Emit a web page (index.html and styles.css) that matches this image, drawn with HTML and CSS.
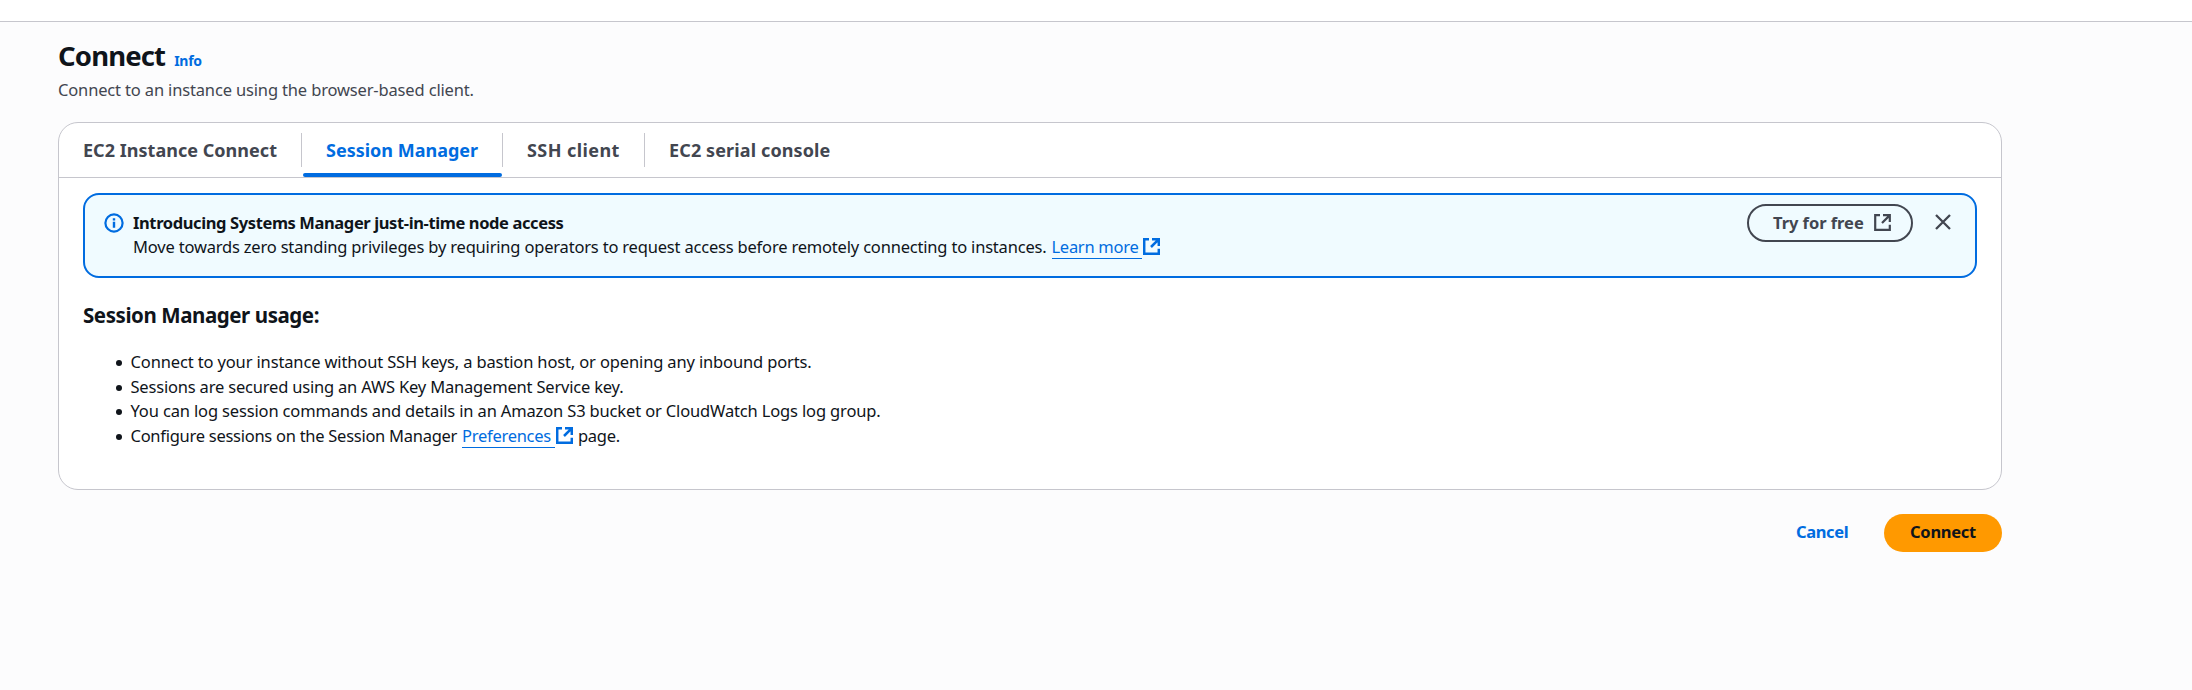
FILE: index.html
```html
<!DOCTYPE html>
<html lang="en">
<head>
<meta charset="utf-8">
<title>Connect to instance</title>
<link rel="stylesheet" href="styles.css">
</head>
<body>
<svg class="sprite" aria-hidden="true">
  <symbol id="external" viewBox="0 0 17 17">
    <path d="M6 1.2H1.2v14.6h14.6v-5M9 1.2h6.8V8M15.4 1.6L8 9" fill="none" stroke="currentColor"/>
  </symbol>
</svg>
<div class="topbar"></div>
<main class="page">
  <header class="heading">
    <div class="heading-row"><h1 class="title">Connect</h1><a class="info">Info</a></div>
    <p class="description">Connect to an instance using the browser-based client.</p>
  </header>
  <section class="panel">
    <nav class="tabs">
      <a class="tab"><span class="tab-label t1">EC2 Instance Connect</span></a>
      <a class="tab active"><span class="tab-label t2">Session Manager</span></a>
      <a class="tab"><span class="tab-label t3">SSH client</span></a>
      <a class="tab"><span class="tab-label t4">EC2 serial console</span></a>
    </nav>
    <div class="content">
      <div class="alert">
        <svg class="alert-icon" viewBox="0 0 20 20"><circle cx="10" cy="10" r="8.6" fill="none" stroke="currentColor" stroke-width="2.2"/><path d="M10 8.7v6M10 5.2v2.2" stroke="currentColor" stroke-width="2.4"/></svg>
        <div class="alert-body">
          <div class="alert-title">Introducing Systems Manager just-in-time node access</div>
          <div class="alert-text"><span class="alert-copy">Move towards zero standing privileges by requiring operators to request access before remotely connecting to instances.</span><a class="link learn">Learn more</a><svg class="ext"><use href="#external"/></svg></div>
        </div>
        <button class="try"><span>Try for free</span><svg class="ext"><use href="#external"/></svg></button>
        <button class="close" aria-label="Close"><svg viewBox="0 0 16 16"><path d="M1 1l14 14M15 1L1 15" stroke="currentColor" stroke-width="2.3" fill="none"/></svg></button>
      </div>
      <h2 class="usage">Session Manager usage:</h2>
      <ul class="list">
        <li><span class="l1">Connect to your instance without SSH keys, a bastion host, or opening any inbound ports.</span></li>
        <li><span class="l2">Sessions are secured using an AWS Key Management Service key.</span></li>
        <li><span class="l3">You can log session commands and details in an Amazon S3 bucket or CloudWatch Logs log group.</span></li>
        <li><span class="l4">Configure sessions on the Session Manager</span><a class="link prefs">Preferences</a><svg class="ext"><use href="#external"/></svg><span class="l5">page.</span></li>
      </ul>
    </div>
  </section>
  <footer class="actions"><a class="cancel">Cancel</a><button class="connect">Connect</button></footer>
</main>
</body>
</html>
```
FILE: styles.css
```css
* { box-sizing: border-box; }
body { margin: 0; min-height: 690px; background: #fcfcfd; color: #0f141a; font: 16.5px/24.6px "Noto Sans", "Open Sans", sans-serif; white-space: nowrap; }
h1, h2, p, ul { margin: 0; padding: 0; }
button { font: inherit; background: none; border: 0; padding: 0; margin: 0; color: inherit; }
.sprite { display: none; }
.topbar { height: 22px; background: #fff; border-bottom: 1px solid #c6c6cd; }
.page { width: 1944px; margin-left: 58px; }
.heading { height: 100px; padding-top: 15px; }
.heading-row { display: flex; align-items: baseline; gap: 9px; height: 41px; line-height: 37px; }
.title { font-size: 27.5px; font-weight: 700; line-height: 37px; letter-spacing: -0.85px; }
.info { font-size: 14px; font-weight: 700; color: #006ce0; letter-spacing: -0.3px; }
.description { color: #424650; letter-spacing: -0.155px; }
.panel { height: 368px; background: #fff; border: 1px solid #c6c6cd; border-radius: 20px; }
.tabs { display: flex; height: 55px; border-bottom: 1px solid #c6c6cd; padding-left: 1px; }
.tab { display: flex; align-items: flex-start; position: relative; padding: 10px 0 0 24px; font-size: 18px; font-weight: 700; color: #424650; line-height: 34px; height: 54px; width: 242px; }
.tab:first-child { padding-left: 23px; }
.tab:nth-child(2) { width: 201px; }
.tab:nth-child(3) { width: 142px; }
.tab:not(:last-child)::after { content: ""; position: absolute; right: 0; top: 10px; height: 34px; width: 1px; background: #c6c6cd; }
.tab.active { color: #006ce0; padding-left: 24px; }
.tab.active::before { content: ""; position: absolute; left: 1px; right: 1px; bottom: 0; height: 4px; border-radius: 2px; background: #006ce0; }
.t1 { letter-spacing: 0.03px; }
.t3 { letter-spacing: 0.42px; }
.t4 { letter-spacing: 0.12px; }
.content { padding: 15px 24px 0; }
.alert { display: flex; height: 85px; border: 2px solid #006ce0; border-radius: 16px; background: #f0fbff; }
.alert-icon { width: 20px; height: 20px; margin: 18px 9px 0 19px; color: #006ce0; }
.alert-body { flex: 1; padding-top: 16px; }
.alert-title { font-weight: 700; letter-spacing: -0.39px; line-height: 24px; }
.alert-text { display: flex; line-height: 24px; }
.alert-copy { letter-spacing: -0.19px; }
.link { color: #006ce0; height: 24px; border-bottom: 1px solid #006ce0; letter-spacing: -0.28px; }
.ext { width: 17px; height: 17px; color: #006ce0; stroke-width: 2.5; }
.learn { margin-left: 5px; padding-right: 4px; }
.link + .ext { margin: 3px 0 0 1px; }
.try { display: flex; width: 166px; height: 38px; margin-top: 9px; padding-left: 24px; border: 2px solid #424650; border-radius: 19px; color: #424650; font-weight: 700; line-height: 34px; }
.try span { width: 101px; text-align: left; letter-spacing: -0.05px; }
.try .ext { color: #424650; margin-top: 8px; stroke-width: 2.2; }
.close { width: 16px; height: 16px; margin: 19px 24px 0 22px; color: #424650; }
.close svg { display: block; width: 16px; height: 16px; }
.usage { margin-top: 21px; font-size: 20.5px; line-height: 32px; font-weight: 700; letter-spacing: -0.43px; }
.list { list-style: none; margin-top: 19px; }
.list li { display: flex; height: 24.6px; padding-left: 33px; }
.list li::before { content: ""; width: 6px; height: 6px; margin: 10px 8.5px 0 0; border-radius: 50%; background: #0f141a; }
.l1 { letter-spacing: -0.14px; }
.l2 { letter-spacing: -0.19px; }
.l3 { letter-spacing: -0.15px; }
.l4 { letter-spacing: -0.27px; }
.l5 { margin-left: 5px; letter-spacing: -0.25px; }
.prefs { margin-left: 5px; padding-right: 4px; }
.actions { display: flex; justify-content: flex-end; margin-top: 24px; line-height: 36px; font-weight: 700; }
.cancel { width: 88px; color: #006ce0; letter-spacing: -0.38px; }
.connect { width: 118px; height: 38px; padding-bottom: 2px; border-radius: 19px; background: #ff9900; font-weight: 700; line-height: 36px; letter-spacing: -0.28px; }
```
